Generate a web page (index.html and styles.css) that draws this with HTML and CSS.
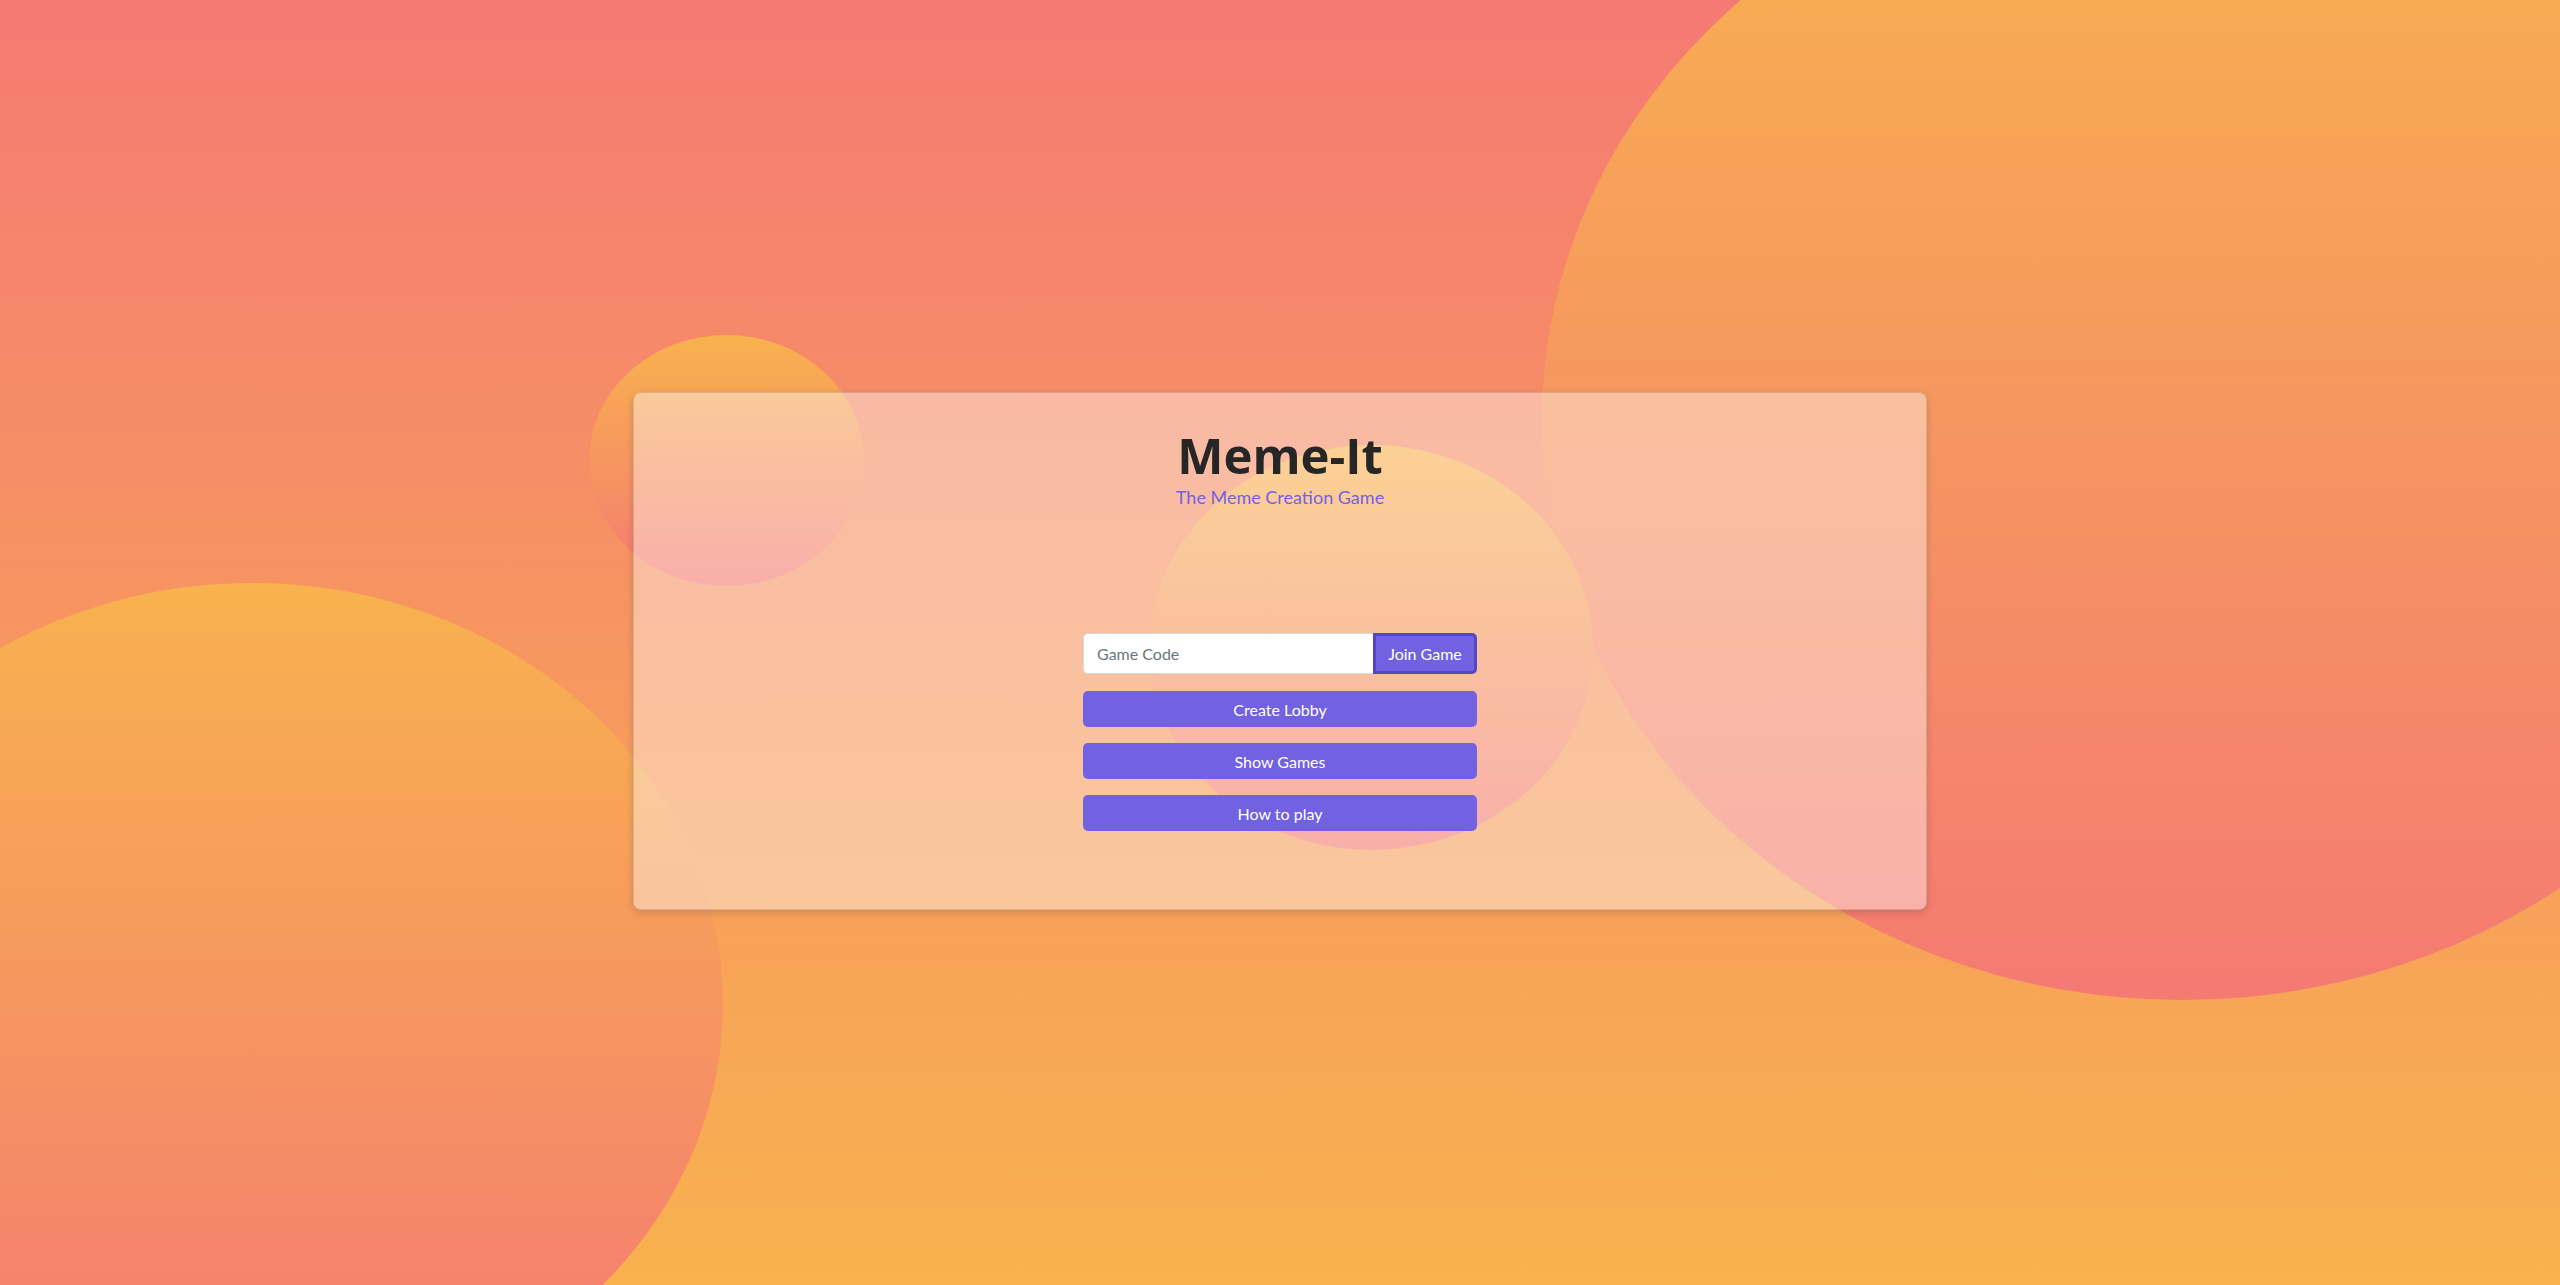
FILE: index.html
```html
<!DOCTYPE html>
<html lang="en">
<head>
<meta charset="utf-8">
<title>Meme-It</title>
<link rel="stylesheet" href="styles.css">
</head>
<body>
<div class="scene">
  <div class="blob blob-right"></div>
  <div class="blob blob-left"></div>
  <div class="blob blob-small"></div>
  <div class="blob blob-mid"></div>
  <main class="card">
    <header class="brand">
      <h1 class="title">Meme-It</h1>
      <p class="subtitle">The Meme Creation Game</p>
    </header>
    <form class="menu" onsubmit="return false">
      <div class="join-row">
        <input class="code-input" type="text" placeholder="Game Code">
        <button class="join-btn" type="button">Join Game</button>
      </div>
      <button class="btn" type="button">Create Lobby</button>
      <button class="btn" type="button">Show Games</button>
      <button class="btn" type="button">How to play</button>
    </form>
  </main>
</div>
</body>
</html>
```

FILE: styles.css
```css
html, body {
  margin: 0;
  padding: 0;
  height: 100%;
}

body {
  font-family: Lato, "Open Sans", sans-serif;
  overflow: hidden;
}

.scene {
  position: relative;
  height: 100vh;
  overflow: hidden;
  background: linear-gradient(to bottom, #f57a73 0%, #f8b24e 100%);
  display: flex;
  justify-content: center;
  align-items: center;
  padding-top: 17px;
  box-sizing: border-box;
}

.blob {
  position: absolute;
  border-radius: 50%;
  background: linear-gradient(to bottom, #f8b24e 0%, #f47a72 100%);
}

.blob-right {
  left: 1542px;
  top: -160px;
  width: 1280px;
  height: 1160px;
}

.blob-left {
  left: -219px;
  top: 583px;
  width: 942px;
  height: 842px;
}

.blob-small {
  left: 589px;
  top: 335px;
  width: 275px;
  height: 251px;
}

.blob-mid {
  left: 1150px;
  top: 445px;
  width: 443px;
  height: 405px;
}

.card {
  position: relative;
  z-index: 1;
  width: 1294px;
  height: 518px;
  box-sizing: border-box;
  border: 1px solid rgba(0, 0, 0, 0.12);
  border-radius: 8px;
  background: rgba(255, 255, 255, 0.4);
  box-shadow: 0 3px 8px rgba(0, 0, 0, 0.15);
  display: flex;
  flex-direction: column;
  align-items: center;
  padding-top: 38px;
}

.brand {
  display: flex;
  flex-direction: column;
  align-items: center;
}

.title {
  margin: 0;
  font-family: "Open Sans", "Noto Sans", sans-serif;
  font-weight: 700;
  font-size: 49px;
  line-height: 49px;
  color: #262626;
}

.subtitle {
  margin: 8px 0 0;
  font-size: 18px;
  line-height: 18px;
  color: #7461e6;
}

.menu {
  margin-top: 127px;
  width: 394px;
  display: flex;
  flex-direction: column;
  gap: 16px;
}

.join-row {
  display: flex;
  height: 41px;
  margin-bottom: 1px;
}

.code-input {
  flex: 1;
  min-width: 0;
  box-sizing: border-box;
  height: 41px;
  margin: 0;
  padding: 0 13px;
  border: 1px solid #d9d9d9;
  border-right: none;
  border-radius: 5px 0 0 5px;
  background: #fff;
  font-family: inherit;
  font-size: 16px;
  color: #333;
  outline: none;
}

.code-input::placeholder {
  color: #6c757d;
}

.join-btn {
  width: 104px;
  box-sizing: border-box;
  height: 41px;
  margin: 0;
  padding: 0;
  border: 3px solid #5646c6;
  border-radius: 0 5px 5px 0;
  background: #7261e1;
  color: #fff;
  font-family: inherit;
  font-size: 16px;
  cursor: pointer;
}

.btn {
  height: 36px;
  margin: 0;
  padding: 0;
  border: none;
  border-radius: 5px;
  background: #7261e1;
  color: #fff;
  font-family: inherit;
  font-size: 16px;
  cursor: pointer;
}
```
